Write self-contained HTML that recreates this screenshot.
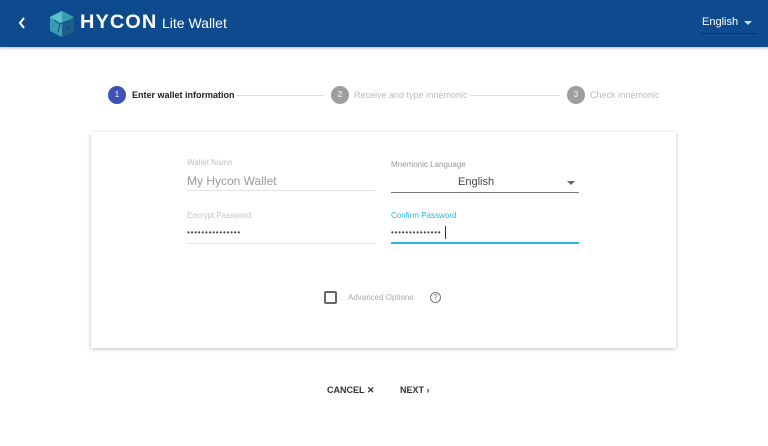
<!DOCTYPE html>
<html><head><style>
*{margin:0;padding:0;box-sizing:border-box}
body{width:768px;height:446px;background:#fff;font-family:"Liberation Sans",sans-serif;position:relative;overflow:hidden}
.hdr{position:absolute;left:0;top:0;width:768px;height:47px;background:#0e4a8e;box-shadow:0 1px 3px rgba(0,0,0,.3)}
.abs{position:absolute}
.lbl{position:absolute;font-size:8px;color:#c4c4c4}
.line{position:absolute;height:1px;background:#ddd}
.circ{position:absolute;width:18px;height:18px;border-radius:50%;color:#fff;font-size:8px;text-align:center;line-height:18px}
.dots{position:absolute;font-size:8px;color:#444;letter-spacing:0.8px;white-space:nowrap}
</style></head><body>
<div class="hdr">
  <svg class="abs" style="left:18px;top:17px" width="8" height="12" viewBox="0 0 8 12"><path d="M6 1L2 6l4 5" stroke="#fff" stroke-width="2" fill="none"/></svg>
  <svg class="abs" style="left:48px;top:10px" width="28" height="28" viewBox="0 0 28 28"><polygon points="14,1 26,7 26,21 14,27 2,21 2,7" fill="#3a9cb0"/><polygon points="14,14 26,7 26,21 14,27" fill="#1d5f86"/><polygon points="2,7 14,1 14,14" fill="#5cc0c8"/><path d="M6 10l6 4 8-3M12 14l-2 8M18 16l4 4" stroke="#0e4a8e" stroke-width="1" fill="none"/></svg>
  <div class="abs" style="left:80px;top:12px;color:#fff;font-weight:bold;font-size:19px;letter-spacing:1px;transform:scaleX(1.05);transform-origin:left">HYCON</div>
  <div class="abs" style="left:162px;top:15px;color:#fff;font-size:14px">Lite Wallet</div>
  <div class="abs" style="left:702px;top:16px;color:#fff;font-size:11px">English</div>
  <div class="abs" style="left:744px;top:21px;width:0;height:0;border-left:4px solid transparent;border-right:4px solid transparent;border-top:4px solid #fff;opacity:.8"></div>
  <div class="abs" style="left:701px;top:33px;width:56px;height:1px;background:#0a2f5a"></div>
</div>
<div class="circ" style="left:108px;top:86px;background:#3f51b5">1</div>
<div class="abs" style="left:132px;top:90px;font-size:9px;font-weight:bold;color:#222">Enter wallet information</div>
<div class="line" style="left:236px;top:95px;width:88px"></div>
<div class="circ" style="left:331px;top:86px;background:#9e9e9e">2</div>
<div class="abs" style="left:354px;top:90px;font-size:9px;color:#bbb">Receive and type mnemonic</div>
<div class="line" style="left:470px;top:95px;width:90px"></div>
<div class="circ" style="left:567px;top:86px;background:#9e9e9e">3</div>
<div class="abs" style="left:590px;top:90px;font-size:9px;color:#bbb">Check mnemonic</div>

<div class="abs" style="left:91px;top:132px;width:585px;height:216px;background:#fff;box-shadow:0 1px 4px rgba(0,0,0,.25)"></div>
<div class="lbl" style="left:187px;top:158px">Wallet Name</div>
<div class="abs" style="left:187px;top:174px;font-size:12px;color:#9a9a9a">My Hycon Wallet</div>
<div class="line" style="left:187px;top:190px;width:188px;background:#e2e2e2"></div>
<div class="lbl" style="left:391px;top:160px;color:#999">Mnemonic Language</div>
<div class="abs" style="left:458px;top:176px;font-size:11px;color:#444">English</div>
<div class="abs" style="left:567px;top:181px;border-left:4px solid transparent;border-right:4px solid transparent;border-top:4px solid #666"></div>
<div class="line" style="left:391px;top:192px;width:188px;background:#777"></div>
<div class="lbl" style="left:187px;top:211px">Encrypt Password</div>
<div class="dots" style="left:187px;top:228px">•••••••••••••••</div>
<div class="line" style="left:187px;top:243px;width:188px;background:#e2e2e2"></div>
<div class="lbl" style="left:391px;top:211px;color:#29b6d8">Confirm Password</div>
<div class="dots" style="left:391px;top:228px">••••••••••••••</div>
<div class="abs" style="left:445px;top:226px;width:1px;height:13px;background:#333"></div>
<div class="abs" style="left:391px;top:242px;width:188px;height:2px;background:#29b6d8"></div>
<div class="abs" style="left:324px;top:291px;width:13px;height:13px;border:2px solid #666;border-radius:2px"></div>
<div class="abs" style="left:348px;top:293px;font-size:8px;color:#aaa">Advanced Options</div>
<div class="abs" style="left:430px;top:292px;width:11px;height:11px;border:1px solid #777;border-radius:50%;font-size:8px;color:#777;text-align:center;line-height:9px">?</div>
<div class="abs" style="left:327px;top:385px;font-size:9px;font-weight:bold;color:#333">CANCEL ✕</div>
<div class="abs" style="left:400px;top:385px;font-size:9px;font-weight:bold;color:#333">NEXT ›</div>
</body></html>
